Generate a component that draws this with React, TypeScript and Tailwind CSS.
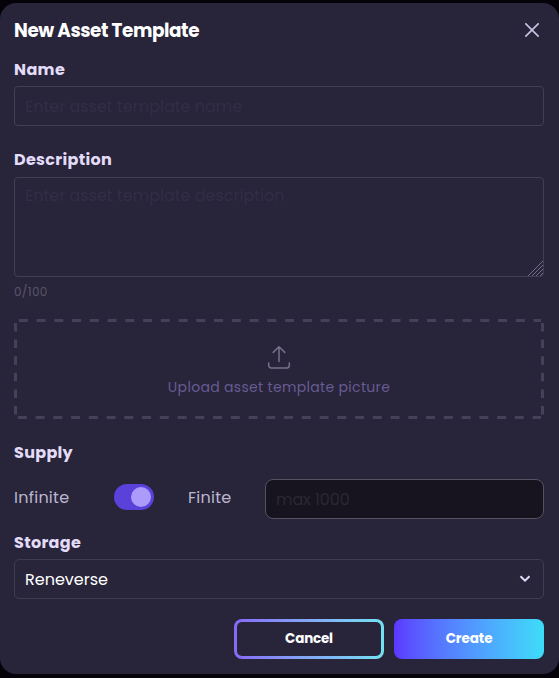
import React from "react";

function FieldLabel({ children, className = "" }: { children: React.ReactNode; className?: string }) {
  return (
    <div className={`flex h-6 items-center text-base font-bold whitespace-nowrap text-[#e3dcf8] ${className}`}>
      {children}
    </div>
  );
}

export default function App() {
  return (
    <div className="h-[678px] w-[559px] overflow-hidden bg-[#050309] pt-[3px] font-['Poppins','Inter',sans-serif]">
      <section className="flex h-[671px] flex-col rounded-2xl bg-[#28243a] pr-[15px] pl-[14px]">
        <header className="mt-[12px] flex h-[30px] items-center justify-between">
          <h1 className="pt-[2px] text-[18.4px] leading-7 font-bold tracking-[-0.42px] whitespace-nowrap text-white">New Asset Template</h1>
          <button aria-label="Close" className="mr-[5px]">
            <svg width="14" height="14" viewBox="0 0 14 14" fill="none" stroke="#c9c3e2" strokeWidth="1.6">
              <path d="M0.3 0.3 13.7 13.7M13.7 0.3 0.3 13.7" />
            </svg>
          </button>
        </header>

        <FieldLabel className="mt-[13px] tracking-[0.35px]">Name</FieldLabel>
        <input
          placeholder="Enter asset template name"
          className="mt-[4px] h-10 shrink-0 rounded-[4px] border border-[#433e54] bg-transparent px-[10px] text-base placeholder:text-[#322e45]"
        />

        <FieldLabel className="mt-[22px] tracking-[0.3px]">Description</FieldLabel>
        <textarea
          placeholder="Enter asset template description"
          className="mt-[5px] h-[100px] shrink-0 resize-none rounded-[4px] border border-[#433e54] bg-transparent px-[10px] pt-[6px] text-base placeholder:text-[#322e45]"
        />
        <div className="relative h-0">
          <svg className="absolute right-[1px] bottom-[1px]" width="15" height="15" fill="none" stroke="#85819a" strokeWidth="0.8">
            <path d="M0 15 15 0M4 15 15 4M8 15 15 8M12 15 15 12" />
          </svg>
        </div>
        <div className="mt-[6px] flex h-[18px] items-center text-xs tracking-[0.3px] text-[#595469]">0/100</div>

        <div className="relative mt-[18px] flex h-[100px] shrink-0 flex-col items-center pt-[26px]">
          <svg className="absolute inset-0" width="530" height="100" fill="none" stroke="#464158" strokeWidth="3">
            <path d="M4.8 1.5H527" strokeDasharray="9 8.75" />
            <path d="M3.8 98.5H527" strokeDasharray="9 8.75" />
            <path d="M1.5 4V96" strokeDasharray="8.5 8.1" />
            <path d="M528.5 4V96" strokeDasharray="8.5 8.1" />
          </svg>
          <svg width="24" height="24" viewBox="0 0 24 24" fill="none" stroke="#77728b" strokeWidth="1.5" strokeLinecap="round" strokeLinejoin="round">
            <path d="M12 16.5V1.8M6.2 7.4 12 1.8 17.8 7.4M1.7 18v2.6a2.4 2.4 0 0 0 2.4 2.4h15.8a2.4 2.4 0 0 0 2.4-2.4V18" />
          </svg>
          <div className="mt-[6px] h-6 text-sm leading-6 tracking-[0.32px] whitespace-nowrap text-[#675c92]">Upload asset template picture</div>
        </div>

        <FieldLabel className="mt-[22px] tracking-[0.3px]">Supply</FieldLabel>
        <div className="mt-[14px] flex h-10 items-center text-base text-[#bcb7ce]">
          <span className="w-[100px] pb-[2px] tracking-[0.25px]">Infinite</span>
          <span className="mb-[4px] flex h-[26px] w-10 items-center justify-end rounded-full bg-[#5941d9] pr-[3px]">
            <span className="size-5 rounded-full bg-[#ad9bfb]" />
          </span>
          <span className="ml-[34px] w-[77px] pb-[2px] tracking-[0.25px]">Finite</span>
          <input
            placeholder="max 1000"
            className="h-10 min-w-0 flex-1 rounded-lg border border-[#555160] bg-[#17131f] px-[10px] text-base tracking-[-0.1px] placeholder:text-[#2b2835]"
          />
        </div>

        <FieldLabel className="mt-[12px] tracking-[0.3px]">Storage</FieldLabel>
        <div className="mt-[4px] flex h-10 items-center justify-between rounded-[5px] border border-[#403b51] pr-[12px] pl-[10px] text-base text-white">
          <span className="pt-[2px]">Reneverse</span>
          <svg width="12" height="8" viewBox="0 0 12 8" fill="none" stroke="#e3dcf8" strokeWidth="2">
            <path d="m1.5 1.2 4.5 4.5 4.5-4.5" />
          </svg>
        </div>

        <footer className="mt-5 flex justify-end gap-[10px] text-[13.5px] font-bold text-white">
          <button className="h-10 w-[150px] rounded-lg bg-linear-to-r from-[#8669f7] to-[#73e1f1] p-[3px] tracking-[-0.2px]">
            <span className="flex size-full items-center justify-center rounded-[5px] bg-[#28243a] pt-px">Cancel</span>
          </button>
          <button className="h-10 w-[150px] rounded-lg bg-linear-to-r from-[#5b37ff] to-[#3ddcf8] pt-px tracking-[-0.1px]">Create</button>
        </footer>
      </section>
    </div>
  );
}
